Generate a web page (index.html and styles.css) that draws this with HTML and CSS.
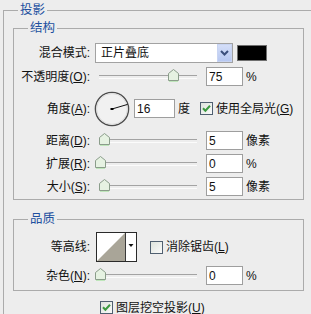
FILE: index.html
```html
<!DOCTYPE html>
<html lang="zh-CN">
<head>
    <meta charset="UTF-8">
    <title>投影</title>
    <link rel="stylesheet" href="styles.css">
</head>
<body>
    <fieldset class="group outer">
        <legend>投影</legend>

        <!-- 结构 -->
        <fieldset class="group section structure">
            <legend>结构</legend>

            <div class="row row-blend">
                <span class="label">混合模式:</span>
                <div class="combo">
                    <span>正片叠底</span>
                    <span class="combo-btn">
                        <svg width="9" height="6" viewBox="0 0 9 6"><path d="M1 1 L4.5 4.5 L8 1" fill="none" stroke="#3b4f7c" stroke-width="2"/></svg>
                    </span>
                </div>
                <span class="swatch"></span>
            </div>

            <div class="row">
                <span class="label">不透明度(<u>O</u>):</span>
                <div class="slider">
                    <svg class="thumb" style="left:73px" width="11" height="13" viewBox="0 0 11 13"><polygon points="0.5,4.5 5.5,0.5 10.5,4.5 10.5,11.5 0.5,11.5" fill="#e6f2e2" stroke="#8b9d8b"/><line x1="1" y1="12.5" x2="10" y2="12.5" stroke="#bfe6bb"/></svg>
                </div>
                <input class="num" type="text" value="75">
                <span class="unit">%</span>
            </div>

            <div class="row row-angle">
                <span class="label">角度(<u>A</u>):</span>
                <svg class="dial" width="36" height="36" viewBox="0 0 36 36">
                    <circle cx="18" cy="18" r="16.6" fill="#f1f1f1" stroke="#4d4d4d" stroke-width="1.4"/>
                    <circle cx="18" cy="18" r="15.4" fill="none" stroke="#dcdcdc" stroke-width="1"/>
                    <line x1="18" y1="18" x2="33.6" y2="13.4" stroke="#111" stroke-width="1"/>
                    <rect x="16.5" y="17" width="3" height="2" fill="#000"/>
                </svg>
                <input class="num short" type="text" value="16">
                <span class="unit">度</span>
                <span class="check">
                    <svg width="11" height="11" viewBox="0 0 11 11"><path d="M2 5.2 L4.4 7.8 L9 2.8" fill="none" stroke="#3c9a40" stroke-width="2"/></svg>
                </span>
                <span class="check-text">使用全局光(<u>G</u>)</span>
            </div>

            <div class="row">
                <span class="label">距离(<u>D</u>):</span>
                <div class="slider">
                    <svg class="thumb" style="left:4px" width="11" height="13" viewBox="0 0 11 13"><polygon points="0.5,4.5 5.5,0.5 10.5,4.5 10.5,11.5 0.5,11.5" fill="#e6f2e2" stroke="#8b9d8b"/><line x1="1" y1="12.5" x2="10" y2="12.5" stroke="#bfe6bb"/></svg>
                </div>
                <input class="num" type="text" value="5">
                <span class="unit">像素</span>
            </div>

            <div class="row">
                <span class="label">扩展(<u>R</u>):</span>
                <div class="slider">
                    <svg class="thumb" style="left:0px" width="11" height="13" viewBox="0 0 11 13"><polygon points="0.5,4.5 5.5,0.5 10.5,4.5 10.5,11.5 0.5,11.5" fill="#e6f2e2" stroke="#8b9d8b"/><line x1="1" y1="12.5" x2="10" y2="12.5" stroke="#bfe6bb"/></svg>
                </div>
                <input class="num" type="text" value="0">
                <span class="unit">%</span>
            </div>

            <div class="row">
                <span class="label">大小(<u>S</u>):</span>
                <div class="slider">
                    <svg class="thumb" style="left:4px" width="11" height="13" viewBox="0 0 11 13"><polygon points="0.5,4.5 5.5,0.5 10.5,4.5 10.5,11.5 0.5,11.5" fill="#e6f2e2" stroke="#8b9d8b"/><line x1="1" y1="12.5" x2="10" y2="12.5" stroke="#bfe6bb"/></svg>
                </div>
                <input class="num" type="text" value="5">
                <span class="unit">像素</span>
            </div>
        </fieldset>

        <!-- 品质 -->
        <fieldset class="group section quality">
            <legend>品质</legend>

            <div class="row row-contour">
                <span class="label">等高线:</span>
                <svg class="contour" width="41" height="30" viewBox="0 0 41 30">
                    <rect x="0.5" y="0.5" width="40" height="29" fill="#fff" stroke="#2a2a2a"/>
                    <polygon points="1,29 29,1 29,29" fill="#a9a598"/>
                    <line x1="29.5" y1="1" x2="29.5" y2="29" stroke="#3a3a3a"/>
                    <polygon points="32.5,12 37.5,12 35,15" fill="#111"/>
                </svg>
                <span class="check"></span>
                <span class="check-text">消除锯齿(<u>L</u>)</span>
            </div>

            <div class="row">
                <span class="label">杂色(<u>N</u>):</span>
                <div class="slider">
                    <svg class="thumb" style="left:0px" width="11" height="13" viewBox="0 0 11 13"><polygon points="0.5,4.5 5.5,0.5 10.5,4.5 10.5,11.5 0.5,11.5" fill="#e6f2e2" stroke="#8b9d8b"/><line x1="1" y1="12.5" x2="10" y2="12.5" stroke="#bfe6bb"/></svg>
                </div>
                <input class="num" type="text" value="0">
                <span class="unit">%</span>
            </div>
        </fieldset>

        <div class="knockout">
            <span class="check">
                <svg width="11" height="11" viewBox="0 0 11 11"><path d="M2 5.2 L4.4 7.8 L9 2.8" fill="none" stroke="#3c9a40" stroke-width="2"/></svg>
            </span>
            <span class="check-text">图层挖空投影(<u>U</u>)</span>
        </div>
    </fieldset>
</body>
</html>
```

FILE: styles.css
```css
/* Global Styles */
* {
    margin: 0;
    padding: 0;
    box-sizing: border-box;
}

html, body {
    width: 311px;
    height: 314px;
    overflow: hidden;
}

body {
    background-color: #ededed;
    font-family: "Liberation Sans", "Noto Sans CJK SC", sans-serif;
    font-size: 12px;
    line-height: 14px;
    color: #111;
}

u {
    text-decoration: underline;
    text-underline-offset: 1px;
}

/* Group boxes */
.group {
    border: 1px solid #ababab;
    min-width: 0;
}

.group > legend {
    margin-left: 14px;
    padding: 0 2px;
    line-height: 14px;
    font-size: 12.5px;
    color: #22509f;
}

/* the dialog's outer box runs on past the right and bottom edges */
.outer {
    margin: 3px 0 0 3px;
    width: 308px;
    border-right: none;
    border-bottom: none;
}

.section {
    margin: 4px 0 0 9px;
    width: 291px;
}

.structure {
    padding: 4px 0 3px;
}

.quality {
    margin-top: 12px;
    padding: 2px 0 5px;
}

/* Rows */
.row {
    display: flex;
    align-items: center;
    height: 19px;
    margin-top: 4px;
}

.row .label {
    width: 76px;
    margin-right: 5px;
    text-align: right;
    white-space: nowrap;
}

.row-blend {
    height: 20px;
}

.row-angle {
    height: 37px;
}

.row-contour {
    height: 30px;
}

/* Combo box */
.combo {
    display: flex;
    align-items: center;
    width: 138px;
    height: 20px;
    padding-left: 5px;
    background-color: #fff;
    border: 1px solid #a2a2a2;
}

.combo-btn {
    display: flex;
    align-items: center;
    justify-content: center;
    margin-left: auto;
    width: 15px;
    height: 18px;
    background: linear-gradient(#d4def8, #b7c8f1);
    border: 1px solid #c8d4f2;
}

.swatch {
    width: 30px;
    height: 16px;
    margin-left: 4px;
    background-color: #000;
    border: 1px solid #6f6f6f;
}

/* Slider */
.slider {
    position: relative;
    width: 102px;
    height: 19px;
}

.slider::before {
    content: "";
    position: absolute;
    left: 4px;
    right: 0;
    top: 8px;
    height: 2px;
    border-top: 1px solid #a3a3a3;
    border-bottom: 1px solid #fbfbfb;
}

.thumb {
    position: absolute;
    top: 2px;
}

/* Number fields */
.num {
    width: 37px;
    height: 19px;
    margin-left: 9px;
    padding-left: 2px;
    background-color: #fff;
    border: 1px solid #9e9e9e;
    font: inherit;
    color: #111;
    outline: none;
}

.num.short {
    width: 41px;
    margin-left: 0;
}

.unit {
    margin-left: 3px;
}

/* Angle dial */
.dial {
    margin-right: 4px;
    margin-left: -1px;
}

/* Checkboxes */
.check {
    display: inline-flex;
    align-items: center;
    justify-content: center;
    width: 13px;
    height: 13px;
    background: linear-gradient(135deg, #dde3dc, #fafafa);
    border: 1px solid #4f5f70;
}

.row-angle .check {
    margin-left: 10px;
}

.row-contour .check {
    margin-left: 13px;
}

.check-text {
    margin-left: 3px;
    white-space: nowrap;
}

/* Contour preview */
.contour {
    margin-left: 1px;
}

/* Layer knocks out */
.knockout {
    display: flex;
    align-items: center;
    height: 13px;
    margin: 10px 0 8px 96px;
}
```
